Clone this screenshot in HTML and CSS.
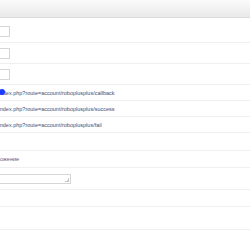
FILE: index.html
```html
<!DOCTYPE html>
<html lang="ru">
<head>
    <meta charset="UTF-8">
    <title>roboplusplus</title>
    <link rel="stylesheet" href="styles.css">
</head>
<body>
  <div class="head"></div>
  <div class="form">
    <div class="row r1"><input class="field" type="text"></div>
    <div class="row r2"><input class="field" type="text"></div>
    <div class="row r3"><input class="field" type="text"></div>
    <div class="row r4"><span class="url">index.php?route=account/roboplusplus/callback</span><span class="dot"></span></div>
    <div class="row r5"><span class="url">index.php?route=account/roboplusplus/success</span></div>
    <div class="row r6"><span class="url">index.php?route=account/roboplusplus/fail</span></div>
    <div class="row r7"></div>
    <div class="row r8"><span class="label">ожение</span></div>
    <div class="row r9"><textarea class="area"></textarea></div>
    <div class="row r10"></div>
    <div class="row r11"></div>
  </div>
</body>
</html>
```
FILE: styles.css
```css
*{
  margin: 0;
  padding: 0;
  box-sizing: border-box;
}

body{
  width: 250px;
  height: 250px;
  overflow: hidden;
  background: #fff;
  font-family: "Liberation Sans", Arial, sans-serif;
  color: #4a4a6a;
}

.head{
  height: 18px;
  background: linear-gradient(to bottom, #fbfbfb, #e9e9e9);
  border-bottom: 1px solid #dcdcdc;
}

.row{
  display: flex;
  align-items: center;
  border-bottom: 1px solid #efefef;
  position: relative;
}

.r1{ height: 25px; padding-top: 3px; }
.r2{ height: 21px; }
.r3{ height: 21px; }
.r4{ height: 16px; }
.r5{ height: 16px; }
.r6{ height: 16px; }
.r7{ height: 18px; }
.r8{ height: 17px; }
.r9{ height: 22px; }
.r10{ height: 17px; }
.r11{ height: 23px; }

.field{
  width: 40px;
  height: 11px;
  margin-left: -30px;
  border: 1px solid #d6d6d6;
  background: #fff;
}

.url{
  font-size: 5.5px;
  margin-left: -1.5px;
  white-space: nowrap;
}

.label{
  font-size: 5.6px;
  white-space: nowrap;
  color: #6a5a80;
}

.dot{
  position: absolute;
  left: -1px;
  top: 4px;
  width: 6px;
  height: 6px;
  border-radius: 50%;
  background: #1b3cff;
}

.area{
  width: 100px;
  height: 10px;
  margin-left: -29px;
  border: 1px solid #d6d6d6;
  resize: none;
  overflow: hidden;
  background: linear-gradient(135deg, transparent 50%, #c8c8c8 50%) no-repeat right 1px bottom 1px / 4px 4px, #fff;
}
```
